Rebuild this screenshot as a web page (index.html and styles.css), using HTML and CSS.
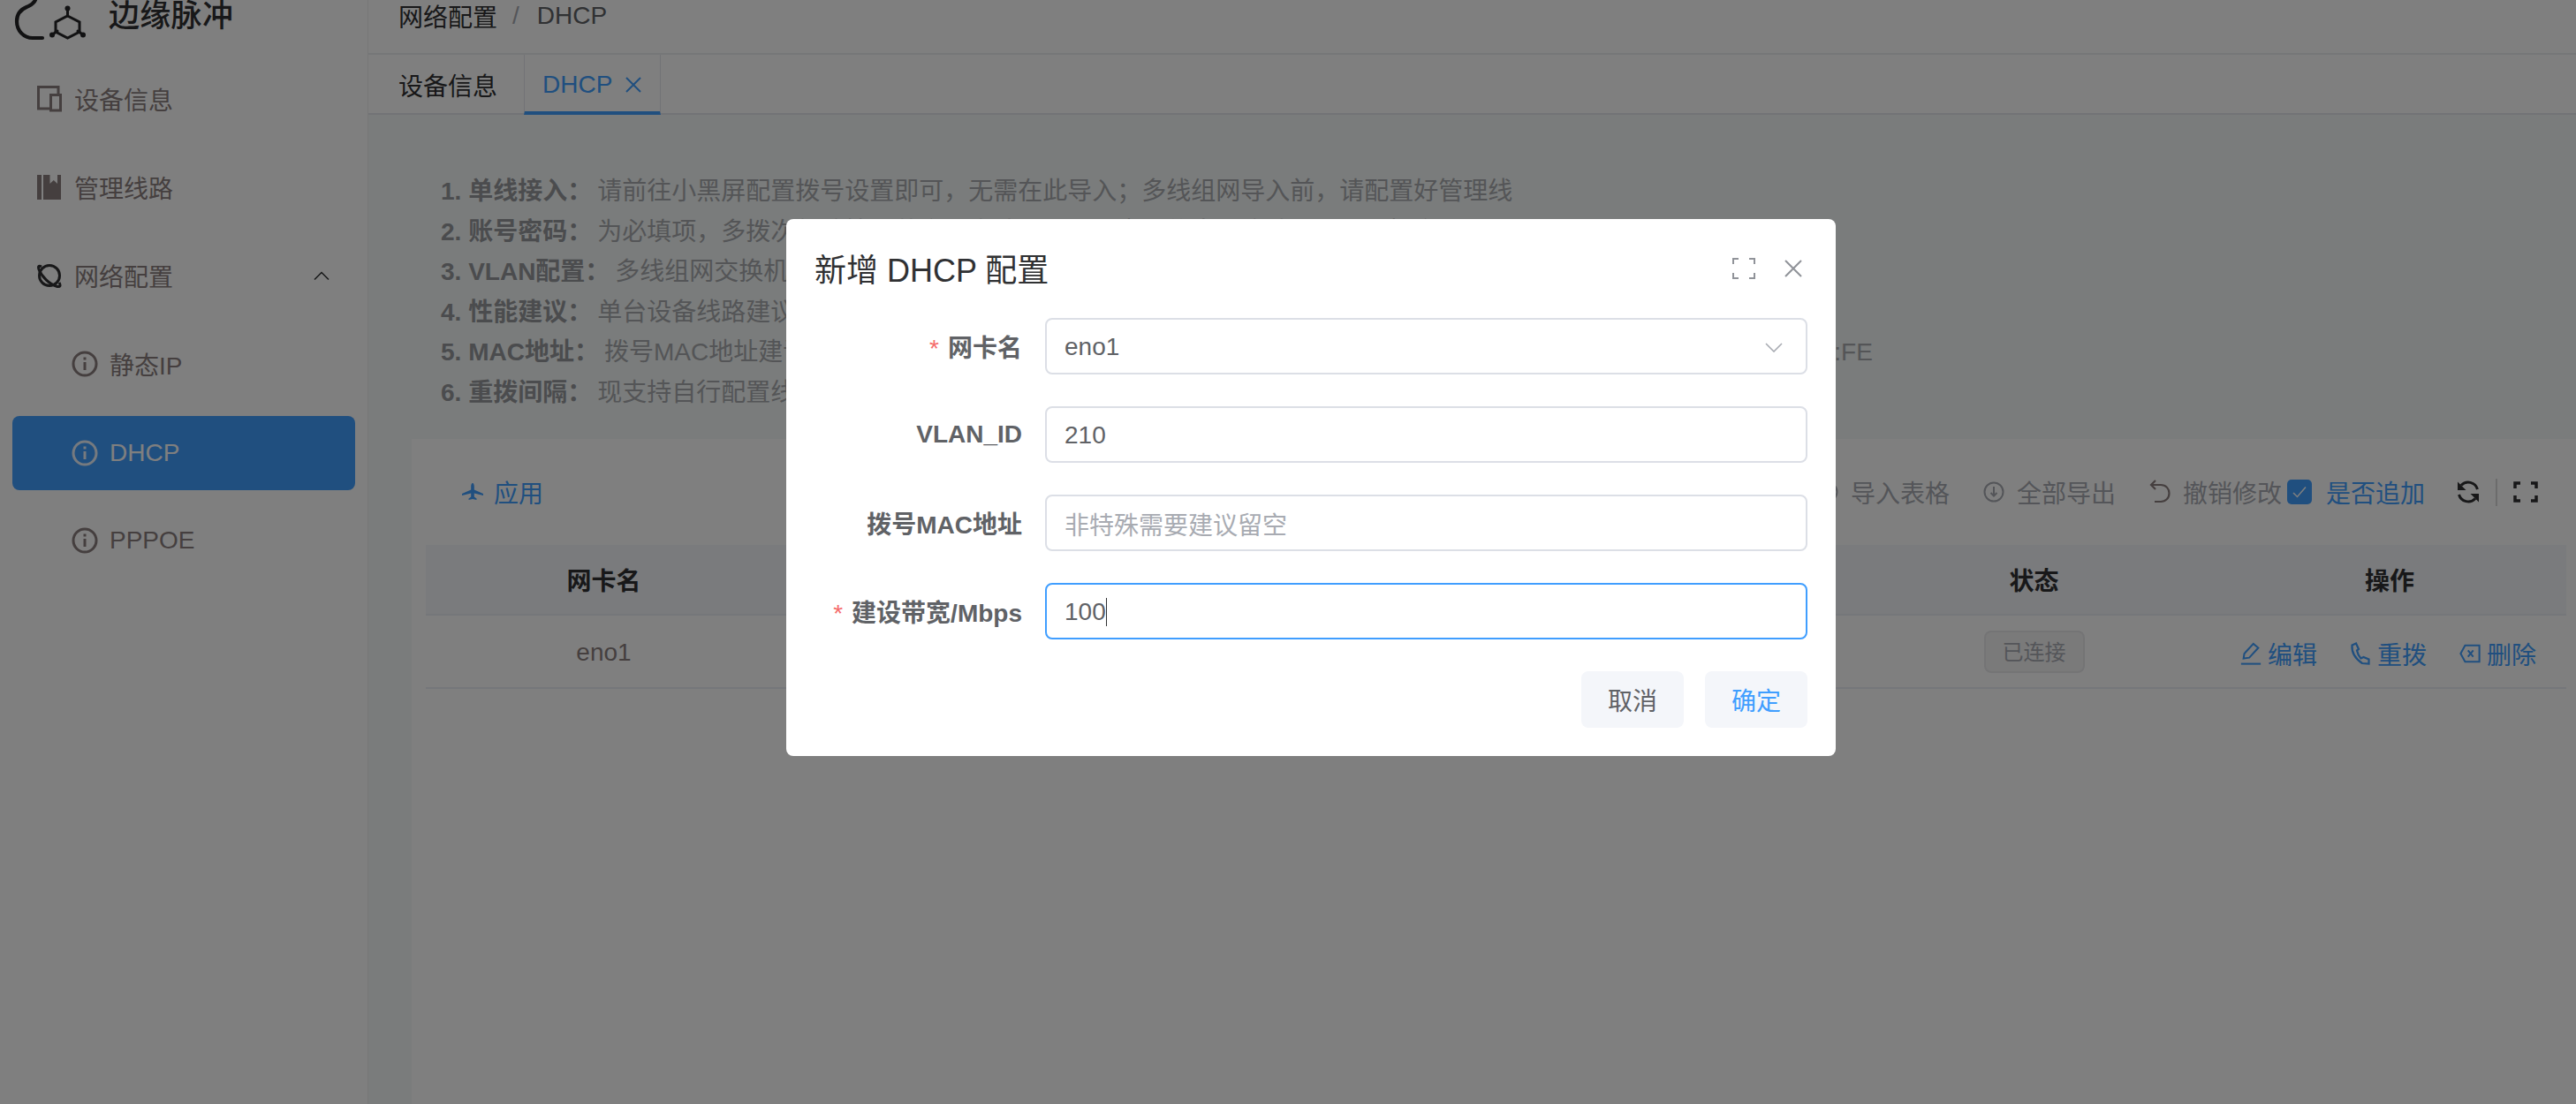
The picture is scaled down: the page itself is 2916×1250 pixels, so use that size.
FILE: index.html
```html
<!DOCTYPE html>
<html lang="zh-CN">
<head>
<meta charset="utf-8">
<title>DHCP</title>
<link rel="stylesheet" href="styles.css">
</head>
<body>
<div class="app">
  <aside class="sidebar">
    <div class="logo">
      <svg class="logo-mark" viewBox="0 0 100 50" width="100" height="50" fill="none" stroke="#242426" stroke-width="4.200" stroke-linecap="round">
        <path d="M40 0 C38 5 34 6 30 8 C23 11 19 17 19 24 C19 35 27 43 37 43 L48 43"/>
        <path d="M76.500 18 L90 25 L90 36 L76.500 43 L63 36 L63 25 Z" stroke-width="3"/>
        <path d="M76.500 10 V18 M59 39.500 L65 35 M94 39.500 L88 35" stroke-width="3"/>
        <circle cx="76.500" cy="9.500" r="3" fill="#242426" stroke="none"/>
        <circle cx="59" cy="39.500" r="3" fill="#242426" stroke="none"/>
        <circle cx="94" cy="39.500" r="3" fill="#242426" stroke="none"/>
      </svg>
      <span class="logo-text">边缘脉冲</span>
    </div>
    <nav class="menu">
      <div class="menu-item">
        <svg class="menu-icon" viewBox="0 0 28 30" fill="none" stroke="currentColor" stroke-width="3"><path d="M14 26H1.500V1.500H24V9"/><rect x="15.500" y="10.500" width="11" height="17.500"/></svg>
        <span>设备信息</span>
      </div>
      <div class="menu-item">
        <svg class="menu-icon" viewBox="0 0 28 30" fill="currentColor"><path d="M0 1H5V29H0Z"/><path d="M7 1H27V29H7Z"/><path d="M14.500 1H23V11L18.750 7L14.500 11Z" fill="#fff"/></svg>
        <span>管理线路</span>
      </div>
      <div class="menu-item">
        <svg class="menu-icon planet" viewBox="0 0 28 28" fill="none" stroke="currentColor" stroke-width="3"><circle cx="14" cy="14" r="11.500"/><path d="M5 4 C1.500 2 1 4 2 7 C5 15 14 24 23 26.500 C26 27 27 25.500 25 22"/></svg>
        <span>网络配置</span>
        <svg class="chevron" viewBox="0 0 18 10" fill="none" stroke="#303133" stroke-width="1.500"><path d="M1 9.500L9 1.500L17 9.500"/></svg>
      </div>
      <div class="menu-item sub">
        <svg class="info-icon" viewBox="0 0 30 30" fill="none" stroke="currentColor" stroke-width="3"><circle cx="15" cy="15" r="13"/><path d="M15 13V22"/><path d="M15 7.500V10.500"/></svg>
        <span>静态IP</span>
      </div>
      <div class="menu-item sub active">
        <svg class="info-icon" viewBox="0 0 30 30" fill="none" stroke="currentColor" stroke-width="3"><circle cx="15" cy="15" r="13"/><path d="M15 13V22"/><path d="M15 7.500V10.500"/></svg>
        <span>DHCP</span>
      </div>
      <div class="menu-item sub">
        <svg class="info-icon" viewBox="0 0 30 30" fill="none" stroke="currentColor" stroke-width="3"><circle cx="15" cy="15" r="13"/><path d="M15 13V22"/><path d="M15 7.500V10.500"/></svg>
        <span>PPPOE</span>
      </div>
    </nav>
  </aside>

  <main class="main">
    <header class="crumbs">
      <span class="crumb-strong">网络配置</span>
      <span class="crumb-sep">/</span>
      <span class="crumb-last">DHCP</span>
    </header>
    <div class="tabs">
      <div class="tab">设备信息</div>
      <div class="tab tab-active">
        <span>DHCP</span>
        <svg class="tab-close" viewBox="0 0 20 20" fill="none" stroke="currentColor" stroke-width="2"><path d="M2 2L18 18M18 2L2 18"/></svg>
      </div>
    </div>

    <div class="content">
      <ol class="notes">
        <li><b>1. 单线接入：</b><span>请前往小黑屏配置拨号设置即可，无需在此导入；多线组网导入前，请配置好管理线</span></li>
        <li><b>2. 账号密码：</b><span>为必填项，多拨次数请按运营商要求填写账号与密码信息，确认无误后再提交</span></li>
        <li><b>3. VLAN配置：</b><span>多线组网交换机需要提前划分好 VLAN，并确保与配置一致</span></li>
        <li><b>4. 性能建议：</b><span>单台设备线路建议不超过设备性能上限，以免影响业务质量</span></li>
        <li><b>5. MAC地址：</b><span>拨号MAC地址建议留空，系统将自动生成；如需手动填写，地址唯一且不与现网冲突，格式示例 00:1A:2B:3C:4D:FE</span></li>
        <li><b>6. 重拨间隔：</b><span>现支持自行配置线路重拨的时间间隔，请按实际需要调整</span></li>
      </ol>

      <section class="card">
        <div class="toolbar">
          <button class="tool tool-primary" type="button">
            <svg class="plane" viewBox="0 0 24 20" fill="currentColor"><path d="M12 0C13.200 0 13.800 2 13.800 4V7.500L24 12V14L13.800 11.500V15.500L16.500 17.500V19L12 18L7.500 19V17.500L10.200 15.500V11.500L0 14V12L10.200 7.500V4C10.200 2 10.800 0 12 0Z"/></svg>
            <span>应用</span>
          </button>
          <div class="tool-right">
            <button class="tool tool-gray tool-import" type="button">
              <svg class="tool-icon" viewBox="0 0 24 24" fill="none" stroke="currentColor" stroke-width="2"><circle cx="12" cy="12" r="10.500"/><path d="M12 17V7M8 11L12 7L16 11"/></svg>
              <span>导入表格</span>
            </button>
            <button class="tool tool-gray" type="button">
              <svg class="tool-icon" viewBox="0 0 24 24" fill="none" stroke="currentColor" stroke-width="2"><circle cx="12" cy="12" r="10.500"/><path d="M12 6V16M8.500 13L12 16.500L15.500 13"/></svg>
              <span>全部导出</span>
            </button>
            <button class="tool tool-gray tool-undo" type="button">
              <svg class="tool-icon" viewBox="0 0 24 28" fill="none" stroke="#8b7e7e" stroke-width="2.200"><path d="M7 1L2 6L7 11"/><path d="M2 6H13C19 6 22.500 10.500 22.500 15.500C22.500 21 18.500 25 13 25H6"/></svg>
              <span>撤销修改</span>
            </button>
            <label class="check">
              <span class="check-box"><svg viewBox="0 0 16 14" width="16" height="14" fill="none" stroke="#fff" stroke-width="1.500"><path d="M1 8L5.500 12.500L15 1.500"/></svg></span>
              <span class="check-text">是否追加</span>
            </label>
            <svg class="refresh" viewBox="0 0 26 26" fill="none" stroke="#303133" stroke-width="3"><path d="M23.500 10 A11 11 0 0 0 5 5.500"/><path d="M2.500 16 A11 11 0 0 0 21 20.500"/><path d="M1 1.500V11H10.500Z" fill="#303133" stroke="none"/><path d="M25 24.500V15H15.500Z" fill="#303133" stroke="none"/></svg>
            <span class="tool-divider"></span>
            <svg class="full" viewBox="0 0 28 24" fill="none" stroke="#303133" stroke-width="3.500"><path d="M8 2H2V8M20 2H26V8M8 22H2V16M20 22H26V16"/></svg>
          </div>
        </div>

        <div class="table">
          <div class="row head">
            <div>网卡名</div><div>VLAN_ID</div><div>拨号MAC地址</div><div>建设带宽/Mbps</div><div>状态</div><div>操作</div>
          </div>
          <div class="row body">
            <div class="cell">eno1</div><div class="cell">210</div><div class="cell">-</div><div class="cell">100</div>
            <div><span class="tag">已连接</span></div>
            <div class="ops">
              <span class="op"><svg viewBox="0 0 24 28" fill="none" stroke="currentColor" stroke-width="2.200"><path d="M3 20L4 14L15 2L21 7L10 19Z"/><path d="M0 26.500H24"/></svg>编辑</span>
              <span class="op"><svg viewBox="0 0 22 26" fill="none" stroke="currentColor" stroke-width="2.200"><path d="M6 1.500L1.500 3.500C1 10 4 18 13 24L20.500 24.500V19.500L14.500 17L11.500 18.500C8.500 15 7.500 12 7 9.500L9 8Z"/></svg>重拨</span>
              <span class="op"><svg viewBox="0 0 26 24" fill="none" stroke="currentColor" stroke-width="2.200"><path d="M7 2H24.500V22H7L1.500 12Z"/><path d="M10.500 8L17 16M17 8L10.500 16"/></svg>删除</span>
            </div>
          </div>
        </div>
      </section>
    </div>
  </main>
</div>

<div class="overlay">
  <div class="dialog">
    <div class="dialog-head">
      <h2 class="dialog-title">新增 DHCP 配置</h2>
      <svg class="dialog-full" viewBox="0 0 26 24" fill="none" stroke="#909399" stroke-width="2"><path d="M7 1H1V7M19 1H25V7M7 23H1V17M19 23H25V17"/></svg>
      <svg class="dialog-close" viewBox="0 0 20 20" fill="none" stroke="#909399" stroke-width="2"><path d="M1 1L19 19M19 1L1 19"/></svg>
    </div>
    <form class="form">
      <div class="field">
        <label class="label"><i>*</i>网卡名</label>
        <div class="input select"><span>eno1</span>
          <svg class="select-arrow" viewBox="0 0 20 11" fill="none" stroke="#a8abb2" stroke-width="1.600"><path d="M1 1L10 10L19 1"/></svg>
        </div>
      </div>
      <div class="field">
        <label class="label">VLAN_ID</label>
        <div class="input"><span>210</span></div>
      </div>
      <div class="field">
        <label class="label">拨号MAC地址</label>
        <div class="input placeholder"><span>非特殊需要建议留空</span></div>
      </div>
      <div class="field">
        <label class="label"><i>*</i>建设带宽/Mbps</label>
        <div class="input focus"><span>100</span><span class="caret"></span></div>
      </div>
    </form>
    <div class="dialog-foot">
      <button class="btn" type="button">取消</button>
      <button class="btn btn-ok" type="button">确定</button>
    </div>
  </div>
</div>
</body>
</html>
```

FILE: styles.css
```css
* { box-sizing: border-box; }
html, body { margin: 0; height: 100%; overflow: hidden; }
body {
  font-family: "Liberation Sans", "Noto Sans CJK SC", sans-serif;
  font-size: 28px;
  color: #606266;
  background: #fff;
}
button { font: inherit; background: none; border: 0; padding: 0; color: inherit; }

.app { display: flex; height: 1250px; }

/* sidebar */
.sidebar { width: 416px; flex: none; background: #fff; color: #8b7e7e; }
.logo { height: 62px; display: flex; align-items: flex-start; }
.logo-mark { flex: none; margin-right: 23px; }
.logo-text { font-size: 35px; line-height: 35px; font-weight: 500; color: #303133; letter-spacing: .3px; }
.menu { display: flex; flex-direction: column; padding-top: 9px; }
.menu-item { height: 84px; margin: 0 14px 16px; display: flex; align-items: center; padding: 0 0 2px 28px; border-radius: 8px; position: relative; }
.menu-icon { width: 28px; height: 30px; flex: none; margin-right: 14px; }
.planet { color: #303133; }
.chevron { width: 18px; height: 10px; margin-left: auto; margin-right: 29px; }
.sub { padding-left: 67px; }
.info-icon { width: 30px; height: 30px; flex: none; margin-right: 13px; }
.active { background: #409eff; color: #fff; padding-bottom: 0; }
.active .info-icon { color: #ecf5ff; }

/* main */
.main { flex: 1; min-width: 0; display: flex; flex-direction: column; border-left: 1px solid #eee; }
.crumbs { height: 62px; flex: none; padding: 0 0 24px 34px; display: flex; align-items: center; border-bottom: 2px solid #eceef0; }
.crumb-strong { color: #303133; }
.crumb-sep { margin: 0 20px 0 17px; color: #a8abb2; }
.crumb-last { color: #606266; }
.tabs { height: 68px; flex: none; display: flex; border-bottom: 2px solid #e4e7ed; }
.tab { padding: 2px 32px 0 34px; width: 176px; display: flex; align-items: center; color: #303133; white-space: nowrap; }
.tab-active { width: 155px; padding: 4px 20px 0 20px; color: #409eff; border-left: 1px solid #e4e7ed; border-right: 1px solid #e4e7ed; border-bottom: 4px solid #409eff; height: 68px; justify-content: space-between; }
.tab-close { width: 20px; height: 20px; flex: none; }

.content { flex: 1; background: #f4f8f8; padding: 64px 0 0 49px; min-height: 0; }
.notes { list-style: none; margin: 0 0 30px; padding: 0 0 0 33px; line-height: 45.5px; color: #a9abae; white-space: nowrap; }
.notes b { font-weight: 700; color: #97999d; margin-right: 6px; }

.card { background: #fff; height: 760px; padding: 0 11px 0 16px; }
.toolbar { height: 120px; display: flex; align-items: center; padding: 0 0 0 41px; }
.tool { display: inline-flex; align-items: center; white-space: nowrap; }
.tool-primary { color: #409eff; }
.plane { width: 24px; height: 20px; margin-right: 12px; }
.tool-right { margin-left: auto; display: flex; align-items: center; padding-right: 32px; }
.tool-gray { color: #a8abb2; margin-right: 38px; }
.tool-import { margin-right: 38px; }
.tool-icon { width: 24px; height: 24px; margin-right: 14px; flex: none; }
.tool-undo { margin-right: 6px; }
.tool-undo .tool-icon { height: 28px; }
.check { display: flex; align-items: center; color: #409eff; }
.check-box { width: 28px; height: 28px; background: #409eff; border-radius: 5px; display: flex; align-items: center; justify-content: center; margin-right: 16px; }
.refresh { width: 26px; height: 26px; margin-left: 36px; flex: none; }
.tool-divider { width: 2px; height: 31px; background: #d8d8d8; margin: 0 18px; }
.full { width: 28px; height: 24px; flex: none; }

.table { display: flex; flex-direction: column; }
.row { display: grid; grid-template-columns: 403px 405px 405px 405px 405px 400px; align-items: center; text-align: center; }
.head { height: 80px; background: #f5f7fa; color: #303133; font-weight: 700; border-bottom: 2px solid #ebeef5; }
.body { height: 83px; color: #8b7e7e; border-bottom: 2px solid #ebeef5; }
.cell { padding-top: 3px; }
.tag { display: inline-block; height: 48px; line-height: 46px; padding: 0 19px; font-size: 24px; color: #a8abb2; background: #f4f4f5; border: 2px solid #e9e9eb; border-radius: 8px; vertical-align: middle; }
.ops { display: flex; justify-content: flex-end; gap: 37px; padding: 4px 34px 0 0; color: #409eff; }
.op { display: inline-flex; align-items: center; gap: 7px; }
.op svg { width: 24px; height: 26px; flex: none; }

/* dialog */
.overlay { position: fixed; inset: 0; background: rgba(0, 0, 0, .5); padding: 248px 0 0 890px; }
.dialog { width: 1188px; height: 608px; background: #fff; border-radius: 8px; padding: 32px 32px 0; }
.dialog-head { height: 48px; display: flex; align-items: center; }
.dialog-title { margin: 0 0 3px; font-size: 36px; font-weight: 400; color: #303133; flex: 1; }
.dialog-full { width: 26px; height: 24px; margin-right: 33px; flex: none; }
.dialog-close { width: 20px; height: 20px; margin-right: 6px; flex: none; }
.form { padding-top: 32px; display: flex; flex-direction: column; gap: 36px; }
.field { display: flex; align-items: center; height: 64px; }
.label { width: 258px; padding-right: 26px; flex: none; margin-left: 3px; text-align: right; font-weight: 700; color: #606266; white-space: nowrap; }
.label i { color: #f56c6c; font-style: normal; font-weight: 400; margin-right: 10px; }
.input { flex: 1; height: 64px; display: flex; align-items: center; padding: 2px 20px 0; border: 2px solid #dcdfe6; border-radius: 8px; color: #606266; }
.select { justify-content: space-between; }
.select-arrow { width: 20px; height: 11px; margin-right: 6px; }
.placeholder { color: #a8abb2; }
.focus { border-color: #409eff; }
.caret { width: 1px; height: 32px; background: #303133; }
.dialog-foot { display: flex; justify-content: flex-end; gap: 24px; padding-top: 36px; }
.btn { width: 116px; height: 64px; background: #f4f6fa; border-radius: 8px; color: #606266; }
.btn-ok { color: #409eff; }
```
